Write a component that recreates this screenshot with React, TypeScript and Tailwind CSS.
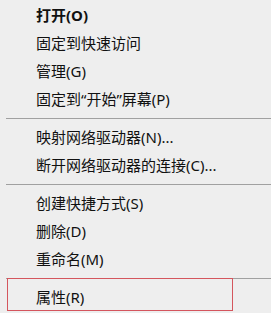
import React from 'react'

type Item = { label: string; bold?: boolean; boxed?: boolean } | 'sep'

const items: Item[] = [
  { label: '打开(O)', bold: true },
  { label: '固定到快速访问' },
  { label: '管理(G)' },
  { label: '固定到“开始”屏幕(P)' },
  'sep',
  { label: '映射网络驱动器(N)...' },
  { label: '断开网络驱动器的连接(C)...' },
  'sep',
  { label: '创建快捷方式(S)' },
  { label: '删除(D)' },
  { label: '重命名(M)' },
  'sep',
  { label: '属性(R)', boxed: true },
]

export default function App() {
  return (
    <div
      className="w-[271px] h-[313px] bg-[#eeeeee] pt-px text-[15px] text-[#111] overflow-hidden"
      style={{ fontFamily: '"Noto Sans", "Noto Sans CJK SC", sans-serif' }}
    >
      {items.map((it, i) =>
        it === 'sep' ? (
          <div key={i} className="h-[10px] flex items-center pl-[6px]">
            <div className="h-px w-full bg-[#a0a0a0]" />
          </div>
        ) : (
          <div key={i} className="relative h-[28px] flex items-center pl-[36px]">
            <span className={it.bold ? 'font-bold' : ''}>{it.label}</span>
            {it.boxed && (
              <div className="absolute left-[7px] top-[-5px] w-[226px] h-[33px] border border-[#d4555d]" />
            )}
          </div>
        )
      )}
    </div>
  )
}
